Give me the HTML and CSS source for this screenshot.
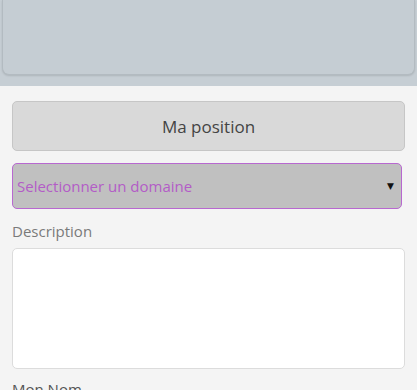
FILE: index.html
```html
<!DOCTYPE html>
<html lang="fr">
<head>
<meta charset="utf-8">
<link rel="stylesheet" href="styles.css">
</head>
<body>
<div class="map-strip">
  <div class="map-box"></div>
</div>
<form class="form">
  <button type="button" class="btn">Ma position</button>
  <div class="select">
    <span class="select-text">Selectionner un domaine</span>
    <span class="select-arrow">&#9660;</span>
  </div>
  <label class="label">Description</label>
  <div class="textarea"></div>
  <label class="label label-name">Mon Nom</label>
</form>
</body>
</html>
```

FILE: styles.css
```css
* { box-sizing: border-box; }
html, body { margin: 0; padding: 0; }
body {
  background: #f4f4f4;
  font-family: "Open Sans", "DejaVu Sans", sans-serif;
  overflow: hidden;
  height: 390px;
}
.map-strip {
  height: 86px;
  background: #c6ced4;
  padding: 0 2px;
}
.map-box {
  height: 75px;
  background: #c5cdd3;
  border: 1px solid #b3bbc1;
  border-top: none;
  border-radius: 0 0 7px 7px;
  box-shadow: 0 1px 2px rgba(0,0,0,0.12);
}
.form {
  padding: 15px 12px 0 12px;
  display: flex;
  flex-direction: column;
  align-items: stretch;
}
.btn {
  height: 50px;
  width: 393px;
  background: #d9d9d9;
  border: 1px solid #c6c6c6;
  border-radius: 5px;
  font-family: "Open Sans", sans-serif;
  font-size: 17px;
  color: #444;
  padding: 0;
  margin: 0;
}
.select {
  margin-top: 12px;
  height: 46px;
  width: 390px;
  background: #c0c0c0;
  border: 1px solid #b868d0;
  border-radius: 5px;
  display: flex;
  align-items: center;
  justify-content: space-between;
  padding: 0 7px 0 4px;
}
.select-text {
  color: #b35cc7;
  font-size: 15px;
}
.select-arrow {
  color: #111;
  font-size: 9px;
  font-family: "DejaVu Sans", sans-serif;
}
.label {
  margin-top: 12px;
  font-size: 15px;
  line-height: 20px;
  color: #7a7a7a;
}
.textarea {
  margin-top: 7px;
  width: 393px;
  height: 121px;
  background: #fff;
  border: 1px solid #dcdcdc;
  border-radius: 5px;
}
.label-name {
  margin-top: 10px;
  color: #555;
}
```
